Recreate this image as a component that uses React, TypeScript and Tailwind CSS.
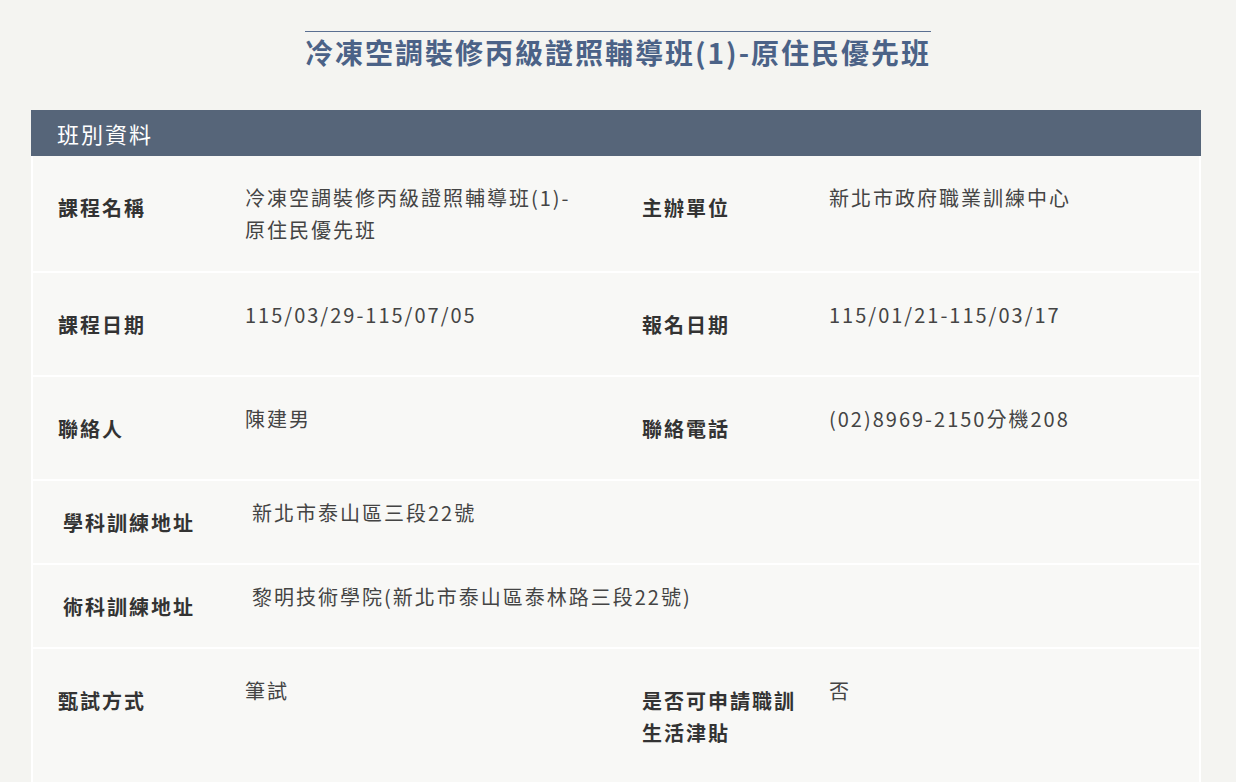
import React from "react";

const font = { fontFamily: '"Noto Sans CJK TC", "Noto Sans", sans-serif' };

function Half({
  label,
  value,
  lw,
  pl,
}: {
  label: React.ReactNode;
  value: React.ReactNode;
  lw: string;
  pl: string;
}) {
  return (
    <div className="flex w-1/2">
      <div className={`${lw} ${pl} shrink-0 pt-[36px] text-[20px] font-bold leading-[32px] tracking-[2px] text-[#333333]`}>
        {label}
      </div>
      <div className="w-[335px] pt-[26px] text-[20px] leading-[32px] tracking-[2px] text-[#444444]">{value}</div>
    </div>
  );
}

function Row({ children, h }: { children: React.ReactNode; h: string }) {
  return <div className={`flex border-x-2 border-b-2 border-white ${h}`}>{children}</div>;
}

export default function App() {
  return (
    <div className="min-h-screen bg-[#f4f4f1]" style={font}>
      <div className="flex justify-center pt-[31px]">
        <h1 className="border-t border-[#5a6f91] text-[28px] font-bold leading-[40px] tracking-[2px] text-[#4b6287]">
          冷凍空調裝修丙級證照輔導班(1)-原住民優先班
        </h1>
      </div>
      <div className="ml-[31px] mt-[38px] w-[1170px] bg-[#f8f8f6]">
        <div className="flex h-[46px] items-center bg-[#566579] pl-[26px] text-[22px] tracking-[2px] text-white">
          班別資料
        </div>
        <Row h="min-h-[117px]">
          <Half lw="w-[212px]" pl="pl-[25px]" label="課程名稱" value="冷凍空調裝修丙級證照輔導班(1)-原住民優先班" />
          <Half lw="w-[213px]" pl="pl-[26px]" label="主辦單位" value="新北市政府職業訓練中心" />
        </Row>
        <Row h="min-h-[104px]">
          <Half lw="w-[212px]" pl="pl-[25px]" label="課程日期" value="115/03/29-115/07/05" />
          <Half lw="w-[213px]" pl="pl-[26px]" label="報名日期" value="115/01/21-115/03/17" />
        </Row>
        <Row h="min-h-[104px]">
          <Half lw="w-[212px]" pl="pl-[25px]" label="聯絡人" value="陳建男" />
          <Half lw="w-[213px]" pl="pl-[26px]" label="聯絡電話" value="(02)8969-2150分機208" />
        </Row>
        <Row h="min-h-[84px]">
          <div className="w-[219px] shrink-0 pl-[30px] pt-[26px] text-[20px] font-bold leading-[32px] tracking-[2px] text-[#333333]">
            學科訓練地址
          </div>
          <div className="pt-[16px] text-[20px] leading-[32px] tracking-[2px] text-[#444444]">新北市泰山區三段22號</div>
        </Row>
        <Row h="min-h-[84px]">
          <div className="w-[219px] shrink-0 pl-[30px] pt-[26px] text-[20px] font-bold leading-[32px] tracking-[2px] text-[#333333]">
            術科訓練地址
          </div>
          <div className="pt-[16px] text-[20px] leading-[32px] tracking-[2px] text-[#444444]">
            黎明技術學院(新北市泰山區泰林路三段22號)
          </div>
        </Row>
        <Row h="min-h-[138px]">
          <Half lw="w-[212px]" pl="pl-[25px]" label="甄試方式" value="筆試" />
          <Half
            lw="w-[213px]"
            pl="pl-[26px]"
            label={
              <>
                是否可申請職訓
                <br />
                生活津貼
              </>
            }
            value="否"
          />
        </Row>
      </div>
    </div>
  );
}
